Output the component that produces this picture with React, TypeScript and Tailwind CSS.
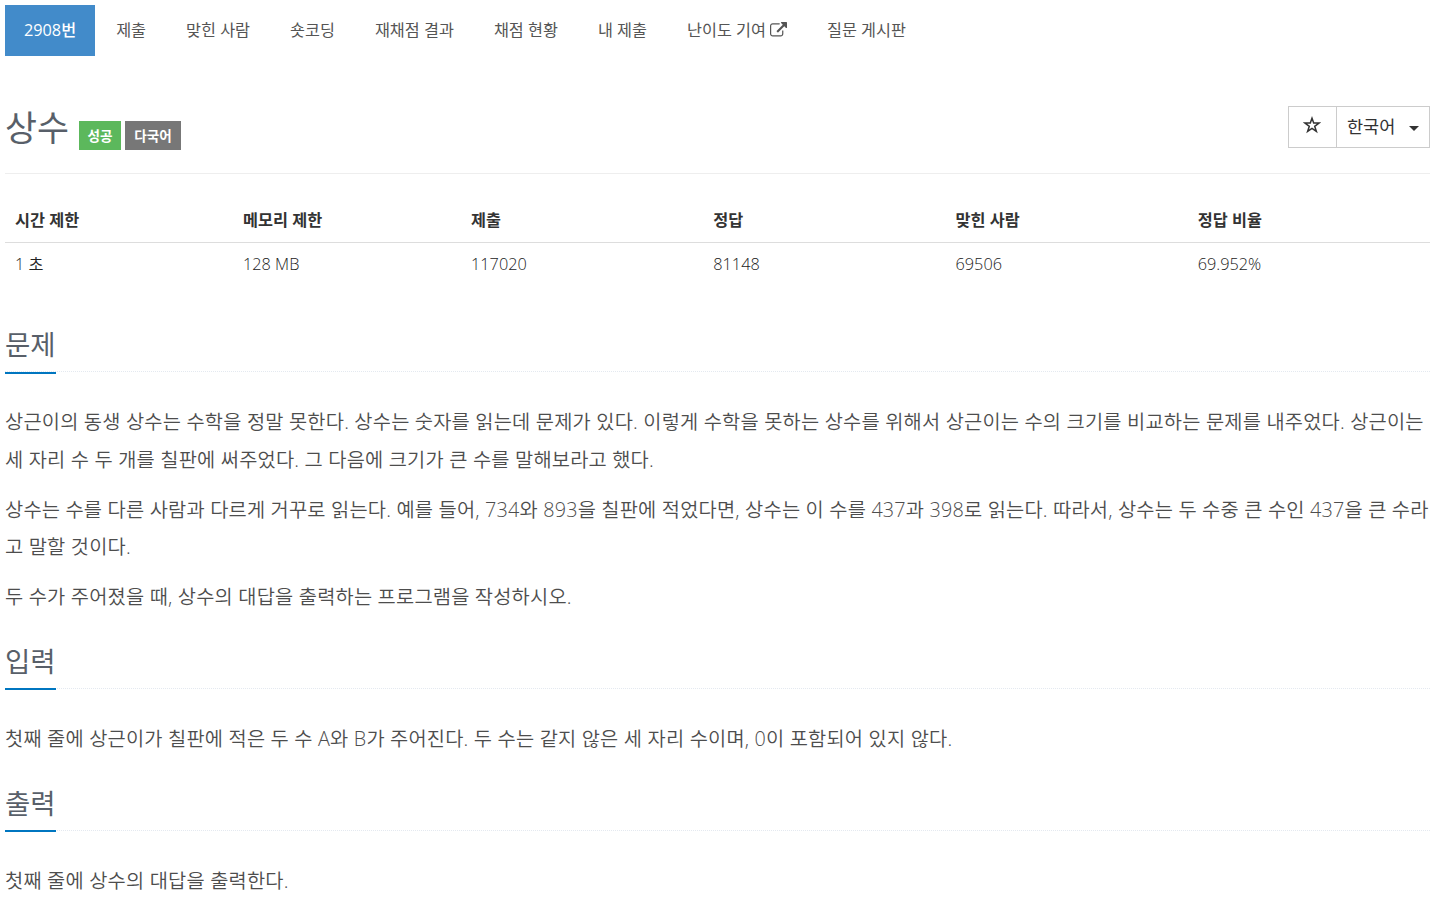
const tabs = ['제출', '맞힌 사람', '숏코딩', '재채점 결과', '채점 현황', '내 제출', '난이도 기여', '질문 게시판'];

const stats = [
    { label: '시간 제한', value: '1 초', width: 'w-[16%]' },
    { label: '메모리 제한', value: '128 MB', width: 'w-[16%]' },
    { label: '제출', value: '117020', width: 'w-[17%]' },
    { label: '정답', value: '81148', width: 'w-[17%]' },
    { label: '맞힌 사람', value: '69506', width: 'w-[17%]' },
    { label: '정답 비율', value: '69.952%', width: 'w-[17%]' },
];

const sections = [
    {
        title: '문제',
        body: [
            '상근이의 동생 상수는 수학을 정말 못한다. 상수는 숫자를 읽는데 문제가 있다. 이렇게 수학을 못하는 상수를 위해서 상근이는 수의 크기를 비교하는 문제를 내주었다. 상근이는 세 자리 수 두 개를 칠판에 써주었다. 그 다음에 크기가 큰 수를 말해보라고 했다.',
            '상수는 수를 다른 사람과 다르게 거꾸로 읽는다. 예를 들어, 734와 893을 칠판에 적었다면, 상수는 이 수를 437과 398로 읽는다. 따라서, 상수는 두 수중 큰 수인 437을 큰 수라고 말할 것이다.',
            '두 수가 주어졌을 때, 상수의 대답을 출력하는 프로그램을 작성하시오.',
        ],
    },
    {
        title: '입력',
        body: ['첫째 줄에 상근이가 칠판에 적은 두 수 A와 B가 주어진다. 두 수는 같지 않은 세 자리 수이며, 0이 포함되어 있지 않다.'],
    },
    { title: '출력', body: ['첫째 줄에 상수의 대답을 출력한다.'] },
];

function Section({ title, body }: { title: string; body: string[] }) {
    return (
        <section>
            <div className="h-[46px] border-b border-dotted border-[#e4e9f0] mb-[31px]">
                <h2 className="inline-block h-[47.6px] border-b-2 border-[#0076c0] text-[27.5px] leading-[37px] text-[#585f69]">{title}</h2>
            </div>
            {body.map((text, i) => (
                <p key={i} className="mb-[12.5px] text-[19.8px] font-[350] tracking-[0.185px] leading-[37.5px] text-[#4d4d4d]">{text}</p>
            ))}
        </section>
    );
}

export default function App() {
    return (
        <div className="h-[898px] overflow-hidden bg-white pl-[5px] pr-2 pt-[5px] text-[#333] font-['Open_Sans','Noto_Sans_CJK_KR',sans-serif]">
            <nav className="flex h-[51px] gap-[2px] text-[16.25px] leading-[50px] text-[#555]">
                <a className="bg-[#428bca] px-[19px] font-medium text-white">2908번</a>
                {tabs.map((tab) => (
                    <a key={tab} className="flex h-[50px] items-center px-[19px]">
                        {tab}
                        {tab === '난이도 기여' && <ExternalIcon />}
                    </a>
                ))}
            </nav>

            <header className="mt-[50px] flex h-[68px] justify-between border-b border-[#eee]">
                <div className="flex">
                    <h1 className="mr-[10px] text-[34.8px] leading-[44px] text-[#585f69]">상수</h1>
                    <span className="mr-1 mt-[15px] h-[29px] w-[42px] bg-[#5cb85c] text-center text-[13.6px] font-bold leading-[29px] text-white">성공</span>
                    <span className="mt-[15px] h-[29px] w-[56px] bg-[#777] text-center text-[13.6px] font-bold leading-[29px] text-white">다국어</span>
                </div>
                <div className="flex h-[42px] border border-[#ccc] text-[17.5px] leading-[39px]">
                    <button className="flex w-[48px] items-center justify-center border-r border-[#ccc]">
                        <StarIcon />
                    </button>
                    <button className="flex w-[92px] items-center pb-[2px] pl-[10px]">
                        한국어
                        <span className="ml-[14px] mt-[5px] border-x-[5px] border-t-[5px] border-x-transparent border-t-[#333]" />
                    </button>
                </div>
            </header>

            <table className="mt-[23px] w-full table-fixed text-left text-[16.3px]">
                <thead>
                    <tr className="h-[45px] border-b border-[#ddd]">
                        {stats.map((stat) => (
                            <th key={stat.label} className={`${stat.width} px-[10px] pt-[2px] font-bold`}>{stat.label}</th>
                        ))}
                    </tr>
                </thead>
                <tbody>
                    <tr className="h-[43px] font-[350] text-[#222]">
                        {stats.map((stat) => (
                            <td key={stat.label} className="px-[10px]">{stat.value}</td>
                        ))}
                    </tr>
                </tbody>
            </table>

            <main className="mt-[41px] flex flex-col gap-[14.8px]">
                {sections.map((section) => (
                    <Section key={section.title} {...section} />
                ))}
            </main>
        </div>
    );
}

function StarIcon() {
    return (
        <svg width="18" height="18" viewBox="0 0 18 18" className="mb-[5px] mr-[1px]" fill="none" stroke="#333" strokeWidth="1.5">
            <path d="M9 2.300l1.700 4.800h5.300l-4.300 3.200 1.650 5.100L9 12.300l-4.350 3.100 1.650-5.100L2 7.100h5.300z" />
        </svg>
    );
}

function ExternalIcon() {
    return (
        <svg width="17" height="17" viewBox="0 0 1792 1792" fill="currentColor" className="ml-[4px]">
            <path d="M1408 928v320q0 119-84.500 203.500t-203.500 84.500h-832q-119 0-203.500-84.500t-84.500-203.500v-832q0-119 84.500-203.500t203.500-84.500h704q14 0 23 9t9 23v64q0 14-9 23t-23 9h-704q-66 0-113 47t-47 113v832q0 66 47 113t113 47h832q66 0 113-47t47-113v-320q0-14 9-23t23-9h64q14 0 23 9t9 23zM1792 64v512q0 26-19 45t-45 19-45-19l-176-176-652 652q-10 10-23 10t-23-10l-114-114q-10-10-10-23t10-23l652-652-176-176q-19-19-19-45t19-45 45-19h512q26 0 45 19t19 45z" />
        </svg>
    );
}
